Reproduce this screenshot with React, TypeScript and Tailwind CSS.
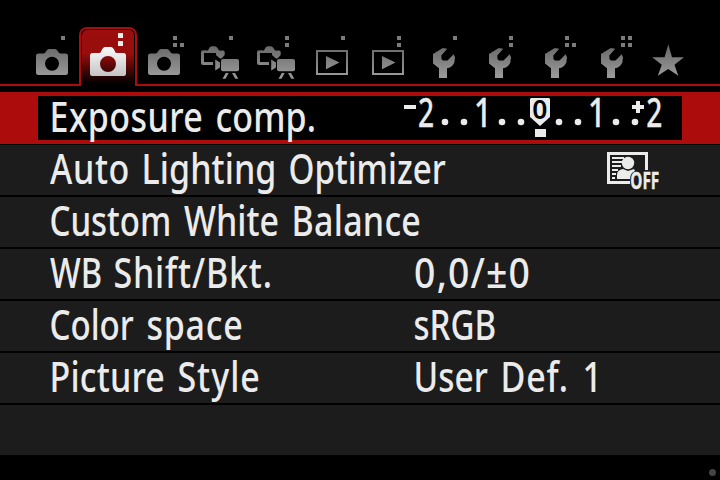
import { useLayoutEffect, useState, type ReactNode } from "react";

type Word = { text: string; left: number; right: number; condense?: number };
type Row = { label: Word[]; value?: Word[] };

const MAX_CONDENSE = 0.81;
const FACE = "500 42px 'Noto Sans'";

const rows: Row[] = [
  { label: [{ text: "Auto", left: 50, right: 128 }, { text: "Lighting", left: 144, right: 274 }, { text: "Optimizer", left: 290, right: 446 }] },
  { label: [{ text: "Custom", left: 51, right: 169 }, { text: "White", left: 184, right: 278 }, { text: "Balance", left: 294, right: 420 }] },
  {
    label: [{ text: "WB", left: 50, right: 101 }, { text: "Shift/Bkt.", left: 115, right: 270 }],
    value: [{ text: "0,0/±0", left: 415, right: 529, condense: 0.89 }],
  },
  {
    label: [{ text: "Color", left: 51, right: 134 }, { text: "space", left: 148, right: 242 }],
    value: [{ text: "sRGB", left: 415, right: 495 }],
  },
  {
    label: [{ text: "Picture", left: 52, right: 164 }, { text: "Style", left: 179, right: 259 }],
    value: [{ text: "User", left: 416, right: 488 }, { text: "Def.", left: 503, right: 566 }, { text: "1", left: 585, right: 596 }],
  },
];

/* A condensed word whose tracking is set so that its ink fills the slot. */
function FittedWord({ word, gap }: { word: Word; gap: number }) {
  const width = word.right - word.left;
  const limit = word.condense ?? MAX_CONDENSE;
  const [fit, setFit] = useState({ shift: 0, tracking: 0, scale: limit });
  useLayoutEffect(() => {
    const ctx = document.createElement("canvas").getContext("2d");
    if (!ctx) return;
    ctx.font = FACE;
    const m = ctx.measureText(word.text);
    const ink = m.actualBoundingBoxRight + m.actualBoundingBoxLeft;
    const gaps = word.text.length - 1;
    const scale = gaps ? Math.min(limit, width / ink) : limit;
    setFit({
      shift: m.actualBoundingBoxLeft,
      tracking: gaps ? (width / scale - ink) / gaps : 0,
      scale,
    });
  }, [word.text, width, limit]);
  return (
    <span className="block shrink-0 whitespace-nowrap" style={{ width, marginLeft: gap }}>
      <span
        className="block w-0 origin-left"
        style={{ letterSpacing: fit.tracking, textIndent: fit.shift, transform: `scaleX(${fit.scale})` }}
      >
        {word.text}
      </span>
    </span>
  );
}

function Words({ words, start }: { words: Word[]; start: number }) {
  return (
    <>
      {words.map((w, i) => (
        <FittedWord key={w.text} word={w} gap={w.left - (i ? words[i - 1].right : start)} />
      ))}
    </>
  );
}

function Camera() {
  return (
    <path
      fillRule="evenodd"
      d="M14.5 53.5H19.5Q21 53.500 22 51.500Q23 49 25 49H31Q33 49 34 51.500Q35 53.500 36.500 53.500H41.500Q44 53.500 44 56V72.500Q44 75 41.500 75H14.500Q12 75 12 72.500V56Q12 53.500 14.500 53.500ZM28 56.700A7 7 0 1 0 28 70.700A7 7 0 1 0 28 56.700Z"
    />
  );
}

function Movie() {
  return (
    <>
      <path d="M16 50.500Q17.500 46.200 20 46.200H22.500Q25 46.200 27 50.500H31Q32.700 50.500 32.700 52V55L29.500 58.500H28L24 55V53H12V62H21V65H11Q9 65 9 63V52Q9 50.200 11 50.200Z" />
      <path d="M23.200 59.500L28 62.500V67.500L23.200 70.500Z" />
      <rect x="29" y="59" width="18" height="12.300" rx="2" />
      <path d="M33.800 73H36.700L33.500 78.700H30.500ZM40 73H43L46.300 78.700H43.300Z" />
    </>
  );
}

function Playback() {
  return (
    <>
      <path fillRule="evenodd" d="M12 50H44V75H12ZM14 52V73H42V52Z" />
      <path d="M22 56L35.500 62.500L22 69.200Z" />
    </>
  );
}

function Wrench() {
  return (
    <path d="M26.700 48L31.300 48.700L25.300 55.500L25.500 59Q26 60.600 28 60.600H31.500L37.700 54.300L39 57.300L38.300 62.700Q36 67.500 31 68.300V78H23V68.300L17 63.500V54Z" />
  );
}

function Star() {
  return <path d="M28.300 44.300L32 57.200H44L34.500 64.800L38.300 75.800L28.200 69L17.800 75.800L21.800 64.800L12.200 57.200H24.600Z" />;
}

const dotSpots = [[37, 36], [37, 43], [44, 43], [44, 36]];
const tabs: { name: string; icon: ReactNode; dots: number }[] = [
  { name: "Shooting 1", icon: <Camera />, dots: 1 },
  { name: "Shooting 2", icon: null, dots: 2 },
  { name: "Shooting 3", icon: <Camera />, dots: 3 },
  { name: "Movie 1", icon: <Movie />, dots: 1 },
  { name: "Movie 2", icon: <Movie />, dots: 2 },
  { name: "Playback 1", icon: <Playback />, dots: 1 },
  { name: "Playback 2", icon: <Playback />, dots: 2 },
  { name: "Set-up 1", icon: <Wrench />, dots: 1 },
  { name: "Set-up 2", icon: <Wrench />, dots: 2 },
  { name: "Set-up 3", icon: <Wrench />, dots: 3 },
  { name: "Set-up 4", icon: <Wrench />, dots: 4 },
  { name: "My Menu", icon: <Star />, dots: 0 },
];

function ActiveTab() {
  return (
    <div className="-mx-px h-[59px] w-[58px] shrink-0 rounded-t-[8px] border-x-2 border-t-2 border-[#ac0d0c] bg-black px-px pt-px">
      <div className="h-[54px] rounded-t-[5px] bg-[linear-gradient(#9c0d0e_0%,#980d0d_44%,#000_100%)]">
        <svg width="52" height="54" viewBox="82 30 52 54" className="block">
          <defs>
            <linearGradient id="silver" x1="0" y1="47" x2="0" y2="76" gradientUnits="userSpaceOnUse">
              <stop offset="0" stopColor="#fafafa" />
              <stop offset="1" stopColor="#c4c4c4" />
            </linearGradient>
          </defs>
          <path fill="#eee" d="M118 33h5v5h-5zM118 41h5v5h-5z" />
          <path
            fill="url(#silver)"
            fillRule="evenodd"
            d="M92.500 53H99Q101 53 101.500 50.500Q103 47 105 47H111Q113 47 114.500 50.500Q115 53 117 53H123.500Q126 53 126 55.500V73.500Q126 76 123.500 76H92.500Q90 76 90 73.500V55.500Q90 53 92.500 53ZM108 56A8 8 0 1 0 108 72A8 8 0 1 0 108 56Z"
          />
        </svg>
      </div>
    </div>
  );
}

function TabBar() {
  return (
    <nav className="flex h-[86px] items-end">
      <div className="h-0.5 w-6 bg-[#ac0d0c]" />
      {tabs.map((tab, i) =>
        i === 1 ? (
          <ActiveTab key={tab.name} />
        ) : (
          <div key={tab.name} className="h-[86px] w-14 shrink-0 border-b-2 border-[#ac0d0c]">
            <svg width="56" height="84" viewBox="0 0 56 84" className="block">
              <defs>
                <linearGradient id={`steel${i}`} x1="0" y1="46" x2="0" y2="76" gradientUnits="userSpaceOnUse">
                  <stop offset="0" stopColor="#686868" />
                  <stop offset="1" stopColor="#999" />
                </linearGradient>
              </defs>
              <g fill={`url(#steel${i})`}>{tab.icon}</g>
              {dotSpots.slice(0, tab.dots).map(([x, y]) => (
                <rect key={`${x}-${y}`} x={x} y={y} width="4" height="4" fill="#7c7c7c" />
              ))}
            </svg>
          </div>
        ),
      )}
      <div className="h-0.5 w-6 bg-[#ac0d0c]" />
    </nav>
  );
}

function ExposureScale() {
  return (
    <svg width="262" height="44" viewBox="402 96 262 44" fill="#ebebeb" className="block overflow-visible">
      <path d="M404 105h12v4h-12zM632 105h12v4h-12zM636 101h4v12h-4z" />
      <g stroke="#ebebeb" strokeWidth="0.300" className="font-['Noto_Sans',sans-serif] text-[39px] leading-none font-medium">
        <text transform="translate(418 127) scale(0.720 1)">2</text>
        <text transform="translate(474 127) scale(0.790 1)">1</text>
        <text transform="translate(588 127) scale(0.790 1)">1</text>
        <text transform="translate(646.300 127) scale(0.720 1)">2</text>
      </g>
      {[445, 464, 502, 521, 559, 578, 616, 635].map((x) => (
        <circle key={x} cx={x} cy="122" r="3.300" />
      ))}
      <path d="M531 98H549L550 99V117L540 126L530 117V99Z" />
      <text transform="translate(532.300 119) scale(0.980 1)" fill="#000" className="font-['Noto_Sans',sans-serif] text-[27px] font-semibold">0</text>
      <path d="M535 129h11v8h-11z" />
    </svg>
  );
}

function LightingOffIcon() {
  return (
    <svg width="54" height="40" viewBox="606 150 54 40" fill="#ebebeb" className="block overflow-visible">
      <path d="M607 152H648V170H645V155H610V181H630V184H607Z" />
      <path d="M612 157h12v2h-12zM612 161h10v2h-10zM612 165h9v2h-9zM612 169h6v2h-6zM612 173h4v2h-4zM612 177h3v2h-3z" />
      <circle cx="628" cy="163" r="6.200" />
      <path d="M617 179V175Q617 170 623 169L628 171L634 169L635 171Q630 173 630 179Z" />
      <text
        x="630.300"
        y="188.700"
        textLength="29"
        lengthAdjust="spacingAndGlyphs"
        stroke="#ebebeb"
        strokeWidth="0.400"
        className="font-['Noto_Sans',sans-serif] text-[23px] font-bold"
      >
        OFF
      </text>
    </svg>
  );
}

export default function App() {
  return (
    <main className="flex h-[480px] w-[720px] flex-col overflow-hidden bg-black font-['Noto_Sans',sans-serif] text-[42px] leading-[48px] font-medium text-[#ebebeb]">
      <TabBar />
      <section className="mt-1.5 mb-px flex h-[52px] shrink-0 bg-[#ac0d0c] px-[38px] py-1">
        <div className="flex h-11 w-[644px] bg-black">
          <div className="-mt-1 flex w-[364px]">
            <Words words={[{ text: "Exposure", left: 52, right: 202 }, { text: "comp.", left: 217, right: 314 }]} start={38} />
          </div>
          <ExposureScale />
        </div>
      </section>
      {rows.map((row, i) => (
        <section key={row.label[0].text} className="flex h-[52px] shrink-0 border-b-2 border-black bg-[#1c1c1c]">
          <div className="-mt-px flex w-[400px] shrink-0">
            <Words words={row.label} start={0} />
          </div>
          {row.value && (
            <div className="-mt-px flex">
              <Words words={row.value} start={400} />
            </div>
          )}
          {i === 0 && (
            <div className="ml-[206px] pt-[5px]">
              <LightingOffIcon />
            </div>
          )}
        </section>
      ))}
      <section className="h-[50px] shrink-0 bg-[#1c1c1c]" />
      <footer className="flex flex-1 items-end justify-end pr-1 pb-1">
        <span className="size-[7px] rounded-full bg-[#444]" />
      </footer>
    </main>
  );
}
